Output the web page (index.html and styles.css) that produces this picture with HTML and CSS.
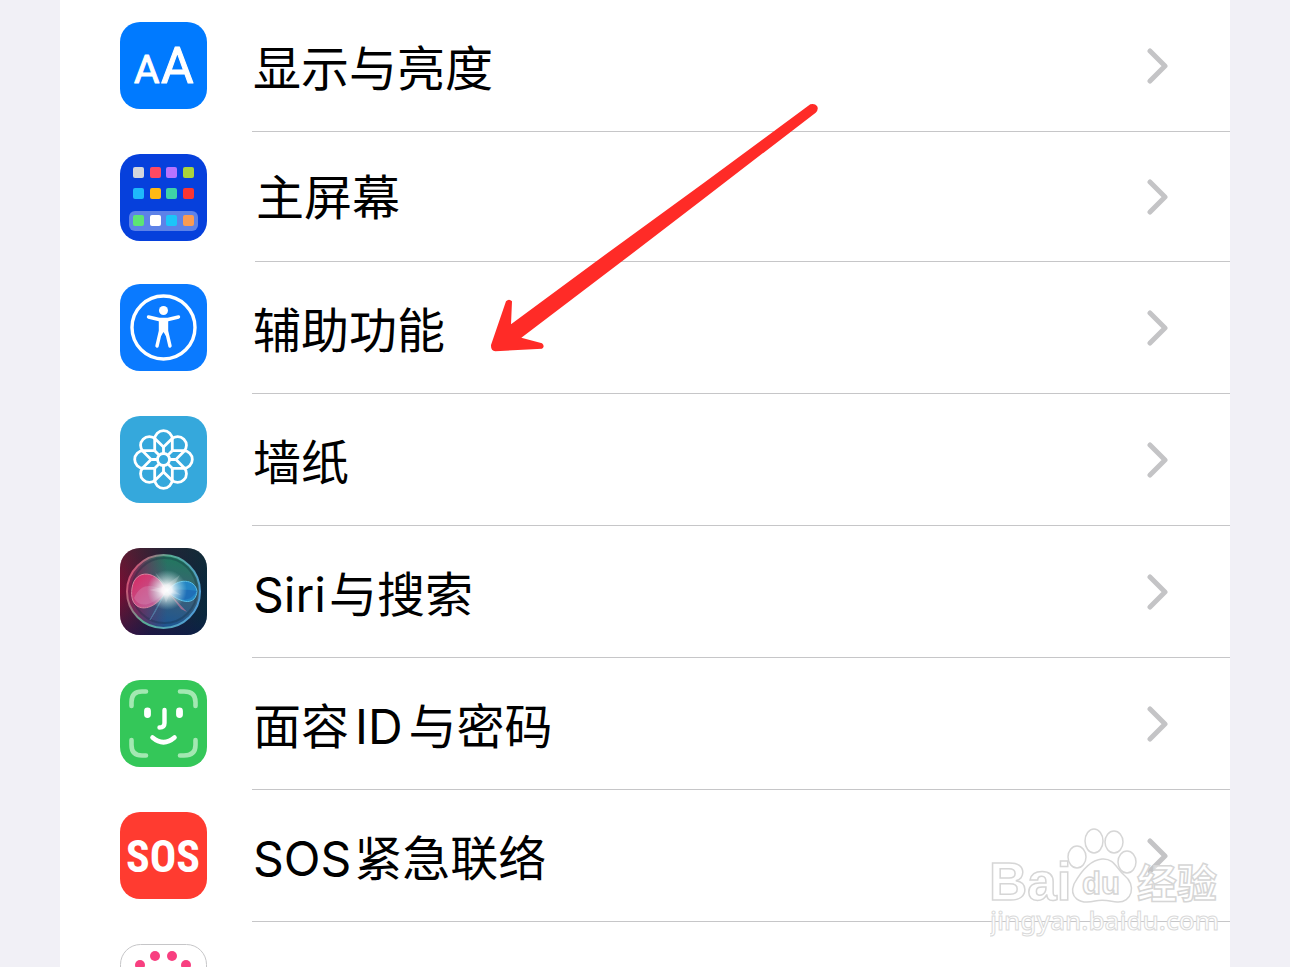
FILE: index.html
```html
<!DOCTYPE html>
<html lang="zh-CN">

<head>
     <meta charset="UTF-8">
     <meta name="viewport" content="width=device-width, initial-scale=1.0">
     <title>设置</title>
     <link rel="stylesheet" href="styles.css">
</head>

<body>

     <main class="settings">
          <nav class="settings-list">
               <a class="row" href="#display">
                    <svg class="row-icon" viewBox="0 0 87 87">
                         <rect width="87" height="87" rx="20" fill="#007aff" />
                         <g class="letters">
                              <text x="14" y="61" font-size="39">A</text>
                              <text x="41" y="61" font-size="50">A</text>
                         </g>
                    </svg>
                    <span class="row-body">
                         <span class="label">显示与亮度</span>
                         <svg class="chevron" viewBox="0 0 22 36"><path d="M3 3L18 18L3 33" /></svg>
                    </span>
               </a>
               <a class="row row-home" href="#home">
                    <svg class="row-icon" viewBox="0 0 87 87">
                         <rect width="87" height="87" rx="20" fill="#0640dc" />
                         <rect x="9" y="57" width="69" height="20" rx="6" fill="#5d82e8" />
                         <rect x="13" y="13" width="11" height="11" rx="2" fill="#d3d6dc" />
                         <rect x="30" y="13" width="11" height="11" rx="2" fill="#ff4962" />
                         <rect x="46" y="13" width="11" height="11" rx="2" fill="#b873ff" />
                         <rect x="63" y="13" width="11" height="11" rx="2" fill="#a9d43c" />
                         <rect x="13" y="34" width="11" height="11" rx="2" fill="#1eb9fb" />
                         <rect x="30" y="34" width="11" height="11" rx="2" fill="#ffb914" />
                         <rect x="46" y="34" width="11" height="11" rx="2" fill="#3fd3a7" />
                         <rect x="63" y="34" width="11" height="11" rx="2" fill="#fb3531" />
                         <rect x="13" y="61" width="11" height="11" rx="2" fill="#5ce574" />
                         <rect x="30" y="61" width="11" height="11" rx="2" fill="#fff" />
                         <rect x="46" y="61" width="11" height="11" rx="2" fill="#1cc5f9" />
                         <rect x="63" y="61" width="11" height="11" rx="2" fill="#fb9b51" />
                    </svg>
                    <span class="row-body">
                         <span class="label">主屏幕</span>
                         <svg class="chevron" viewBox="0 0 22 36"><path d="M3 3L18 18L3 33" /></svg>
                    </span>
               </a>
               <a class="row" href="#accessibility">
                    <svg class="row-icon" viewBox="0 0 87 87">
                         <rect width="87" height="87" rx="20" fill="#0a7aff" />
                         <circle cx="43.500" cy="43.500" r="31.500" fill="none" stroke="#fff" stroke-width="3.400" />
                         <circle cx="43.500" cy="26.500" r="4.500" fill="#fff" />
                         <path d="M28.500 33L39 35.500H48L58.500 33M40.500 37V47L37 62M46.500 37V47L50 62" fill="none" stroke="#fff" stroke-width="3.400" stroke-linecap="round" stroke-linejoin="round" />
                         <path d="M39 35H48V46L46 52L43.500 48L41 52L39 46Z" fill="#fff" />
                    </svg>
                    <span class="row-body">
                         <span class="label">辅助功能</span>
                         <svg class="chevron" viewBox="0 0 22 36"><path d="M3 3L18 18L3 33" /></svg>
                    </span>
               </a>
               <a class="row" href="#wallpaper">
                    <svg class="row-icon" viewBox="0 0 87 87">
                         <defs>
                              <path id="petal" d="M0 -6V-12.400M-8.800 -8.800V-20A8.800 8.800 0 0 1 8.800 -20V-8.800" />
                         </defs>
                         <rect width="87" height="87" rx="20" fill="#35a8dc" />
                         <g transform="translate(43.5 43.5)" fill="none" stroke="#fff" stroke-width="2.800">
                              <circle r="6" />
                              <use href="#petal" />
                              <use href="#petal" transform="rotate(45)" />
                              <use href="#petal" transform="rotate(90)" />
                              <use href="#petal" transform="rotate(135)" />
                              <use href="#petal" transform="rotate(180)" />
                              <use href="#petal" transform="rotate(225)" />
                              <use href="#petal" transform="rotate(270)" />
                              <use href="#petal" transform="rotate(315)" />
                         </g>
                    </svg>
                    <span class="row-body">
                         <span class="label">墙纸</span>
                         <svg class="chevron" viewBox="0 0 22 36"><path d="M3 3L18 18L3 33" /></svg>
                    </span>
               </a>
               <a class="row" href="#siri">
                    <svg class="row-icon" viewBox="0 0 87 87">
                         <defs>
                              <linearGradient id="siri-bg" x1="0" y1="0.400" x2="1" y2="0.600">
                                   <stop offset="0" stop-color="#7c0d34" />
                                   <stop offset="0.450" stop-color="#28183a" />
                                   <stop offset="1" stop-color="#07283d" />
                              </linearGradient>
                              <linearGradient id="siri-shade" x1="0.300" y1="0" x2="0.300" y2="1">
                                   <stop offset="0" stop-color="#14382f" stop-opacity="0.400" />
                                   <stop offset="0.500" stop-color="#14382f" stop-opacity="0" />
                                   <stop offset="1" stop-color="#111750" stop-opacity="0.500" />
                              </linearGradient>
                              <linearGradient id="siri-orb" x1="0.700" y1="0" x2="0.500" y2="1">
                                   <stop offset="0" stop-color="#1f7a5c" />
                                   <stop offset="0.500" stop-color="#3d6076" />
                                   <stop offset="1" stop-color="#1b5594" />
                              </linearGradient>
                              <linearGradient id="siri-left" x1="0" y1="0" x2="1" y2="0">
                                   <stop offset="0" stop-color="#8a1a4b" />
                                   <stop offset="0.550" stop-color="#6c2a55" stop-opacity="0" />
                              </linearGradient>
                              <linearGradient id="siri-ring" x1="0" y1="0.300" x2="1" y2="0.700">
                                   <stop offset="0" stop-color="#d84a72" />
                                   <stop offset="0.400" stop-color="#59ad94" />
                                   <stop offset="1" stop-color="#4f9cda" />
                              </linearGradient>
                              <linearGradient id="siri-pink" x1="0" y1="0" x2="1" y2="1">
                                   <stop offset="0" stop-color="#d82860" />
                                   <stop offset="1" stop-color="#b76fa9" />
                              </linearGradient>
                              <radialGradient id="siri-glow">
                                   <stop offset="0" stop-color="#fff" />
                                   <stop offset="0.250" stop-color="#fff" stop-opacity="0.900" />
                                   <stop offset="1" stop-color="#b8eee8" stop-opacity="0" />
                              </radialGradient>
                         </defs>
                         <rect width="87" height="87" rx="20" fill="url(#siri-bg)" />
                         <rect width="87" height="87" rx="20" fill="url(#siri-shade)" />
                         <circle cx="43.500" cy="43.500" r="36.500" fill="url(#siri-orb)" />
                         <circle cx="43.500" cy="43.500" r="36.500" fill="url(#siri-left)" />
                         <circle cx="44.500" cy="42.500" r="32.500" fill="none" stroke="#10283a" stroke-width="2" opacity="0.300" />
                         <path d="M46 43C38 22 15 20 12 40C8 66 34 66 46 43Z" fill="url(#siri-pink)" stroke="#d8829f" />
                         <path d="M46 43C27 34 20 38 14 50C20 61 32 58 46 43Z" fill="#d893ba" opacity="0.350" />
                         <path d="M47 43C58 29 75 31 77 43C76 57 62 57 47 43Z" fill="#2485c4" stroke="#58bfe8" />
                         <path d="M47 43C60 40 70 42 77 43C70 55 59 54 47 43Z" fill="#1e65b4" opacity="0.700" />
                         <path d="M48 44L67 64L61 61Z" fill="#d87ba1" opacity="0.600" />
                         <path d="M46 43L30 72L35 64Z" fill="#86d8ec" stroke="#66bbdb" opacity="0.400" />
                         <circle cx="43.500" cy="43.500" r="36.500" fill="none" stroke="url(#siri-ring)" stroke-width="2" />
                         <circle cx="47" cy="42" r="20" fill="url(#siri-glow)" />
                         <path d="M35 24L46 37L60 27L52 41L61 47L50 45L46 55L43 45L29 42L43 39Z" fill="#fff" opacity="0.200" />
                    </svg>
                    <span class="row-body">
                         <span class="label">Siri<span class="cjk">与搜索</span></span>
                         <svg class="chevron" viewBox="0 0 22 36"><path d="M3 3L18 18L3 33" /></svg>
                    </span>
               </a>
               <a class="row" href="#faceid">
                    <svg class="row-icon" viewBox="0 0 87 87">
                         <rect width="87" height="87" rx="20" fill="#34c759" />
                         <g fill="none" stroke-linecap="round" stroke-linejoin="round">
                              <path d="M11.500 26V22Q11.500 11.500 22 11.500H26M60 11.500H64Q75.500 11.500 75.500 22V26M75.500 60V65Q75.500 75.500 64 75.500H60M26 75.500H22Q11.500 75.500 11.500 65V60" stroke="#a3e8b2" stroke-width="4.600" />
                              <path d="M27.500 31V34.500M59.500 31V34.500" stroke="#fff" stroke-width="6.800" />
                              <path d="M44.500 30V43Q44.500 47.500 39.500 47.500" stroke="#fff" stroke-width="4.400" />
                              <path d="M32.500 57.500Q43.500 67 54.500 57.500" stroke="#fff" stroke-width="4.600" />
                         </g>
                    </svg>
                    <span class="row-body">
                         <span class="label">面容<span class="latin">ID</span><span class="cjk">与密码</span></span>
                         <svg class="chevron" viewBox="0 0 22 36"><path d="M3 3L18 18L3 33" /></svg>
                    </span>
               </a>
               <a class="row" href="#sos">
                    <svg class="row-icon" viewBox="0 0 87 87">
                         <rect width="87" height="87" rx="20" fill="#ff3b30" />
                         <text class="sos" x="43" y="60">SOS</text>
                    </svg>
                    <span class="row-body">
                         <span class="label">SOS<span class="cjk">紧急联络</span></span>
                         <svg class="chevron" viewBox="0 0 22 36"><path d="M3 3L18 18L3 33" /></svg>
                    </span>
               </a>
               <a class="row" href="#exposure" aria-label="暴露通知">
                    <svg class="row-icon" viewBox="0 0 87 87">
                         <rect x="0.500" y="0.500" width="86" height="86" rx="20" fill="#fff" stroke="#c6c6c8" />
                         <g fill="#f83f80">
                              <circle cx="35" cy="12" r="5" />
                              <circle cx="52" cy="12" r="5" />
                              <circle cx="20" cy="21" r="5" />
                              <circle cx="66" cy="21" r="5" />
                              <circle cx="12" cy="35" r="5" />
                              <circle cx="75" cy="35" r="5" />
                         </g>
                    </svg>
               </a>
          </nav>

          <!-- Red pointer over the accessibility row -->
          <svg class="pointer" viewBox="0 0 1110 840">
               <path d="M1021 43Q1034 39 1041 48Q1047 58 1037 68L700 327L460 511L154 743L216 760Q226 769 216 776L76 784Q62 782 63 765L108 634Q117 625 126 634L123 703L377 515L700 280Z" fill="#ff2b27" />
          </svg>

          <!-- Watermark -->
          <svg class="watermark" viewBox="0 0 240 120">
               <g class="mark">
                    <text x="-1" y="80" font-size="53">Bai</text>
                    <ellipse cx="87" cy="37" rx="9" ry="11" />
                    <ellipse cx="104" cy="21" rx="9" ry="12" />
                    <ellipse cx="124" cy="22" rx="9" ry="11" />
                    <ellipse cx="137" cy="42" rx="9" ry="11" />
                    <path d="M112 39C124 38 126 48 134 55C147 65 142 83 127 82C119 81 114 79 105 81C89 85 79 77 84 64C89 55 99 40 112 39Z" />
                    <text x="92" y="74" font-size="31">du</text>
                    <text class="mark-cjk" x="147" y="78" font-size="40">经验</text>
               </g>
               <text class="mark-url" x="0" y="110">jingyan.baidu.com</text>
          </svg>
     </main>

</body>

</html>
```

FILE: styles.css
```css
* {
     padding: 0;
     margin: 0;
     box-sizing: border-box;
}

html,
body {
     height: 100%;
     overflow: hidden;
}

body {
     background: #f1f0f6;
     font-family: Inter, "Noto Sans CJK SC", sans-serif;
}

.settings {
     position: relative;
     height: 100%;
     padding: 0 60px;
     overflow: hidden;
}

.settings-list {
     background: #fff;
}

.row {
     display: flex;
     gap: 45px;
     height: 132px;
     padding-left: 60px;
     color: #000;
     text-decoration: none;
}

.row-home {
     gap: 48px;
     height: 130px;
}

.row-icon {
     flex: none;
     width: 87px;
     height: 87px;
     margin-top: 22px;
}

.row-body {
     flex: 1;
     display: flex;
     align-items: center;
     justify-content: space-between;
     padding-right: 61px;
     border-bottom: 1px solid #c6c6c8;
}

.label {
     padding-top: 6px;
     padding-left: 1px;
     font-size: 48px;
     line-height: 60px;
     white-space: nowrap;
}

.row-home .label {
     padding-top: 2px;
}

.latin {
     margin: 0 3px 0 6px;
}

.cjk {
     margin-left: 3px;
}

.chevron {
     width: 22px;
     height: 36px;
     fill: none;
     stroke: #c4c4c6;
     stroke-width: 5;
     stroke-linecap: round;
     stroke-linejoin: round;
}

.letters {
     fill: #fff;
     stroke: #fff;
     stroke-width: 1;
     stroke-linejoin: round;
     font-family: Roboto, sans-serif;
}

.sos {
     fill: #fff;
     font-family: "Roboto Condensed", "Liberation Sans Narrow", Roboto, sans-serif;
     font-size: 44px;
     font-weight: 700;
     text-anchor: middle;
}

.pointer {
     position: absolute;
     left: 470px;
     top: 90px;
     width: 370px;
     height: 280px;
     pointer-events: none;
}

.watermark {
     position: absolute;
     right: 60px;
     top: 820px;
     width: 240px;
     height: 120px;
     pointer-events: none;
}

.mark {
     fill: #fff;
     fill-opacity: 0.5;
     stroke: #d6d6d6;
     stroke-width: 1.5;
     font-family: "Liberation Sans", sans-serif;
     font-weight: 700;
}

.mark-cjk {
     font-family: "Noto Sans CJK SC", sans-serif;
}

.mark-url {
     fill: #fff;
     stroke: #dadada;
     stroke-width: 1;
     font-family: "Noto Sans", sans-serif;
     font-size: 26px;
     font-weight: 500;
}
```
